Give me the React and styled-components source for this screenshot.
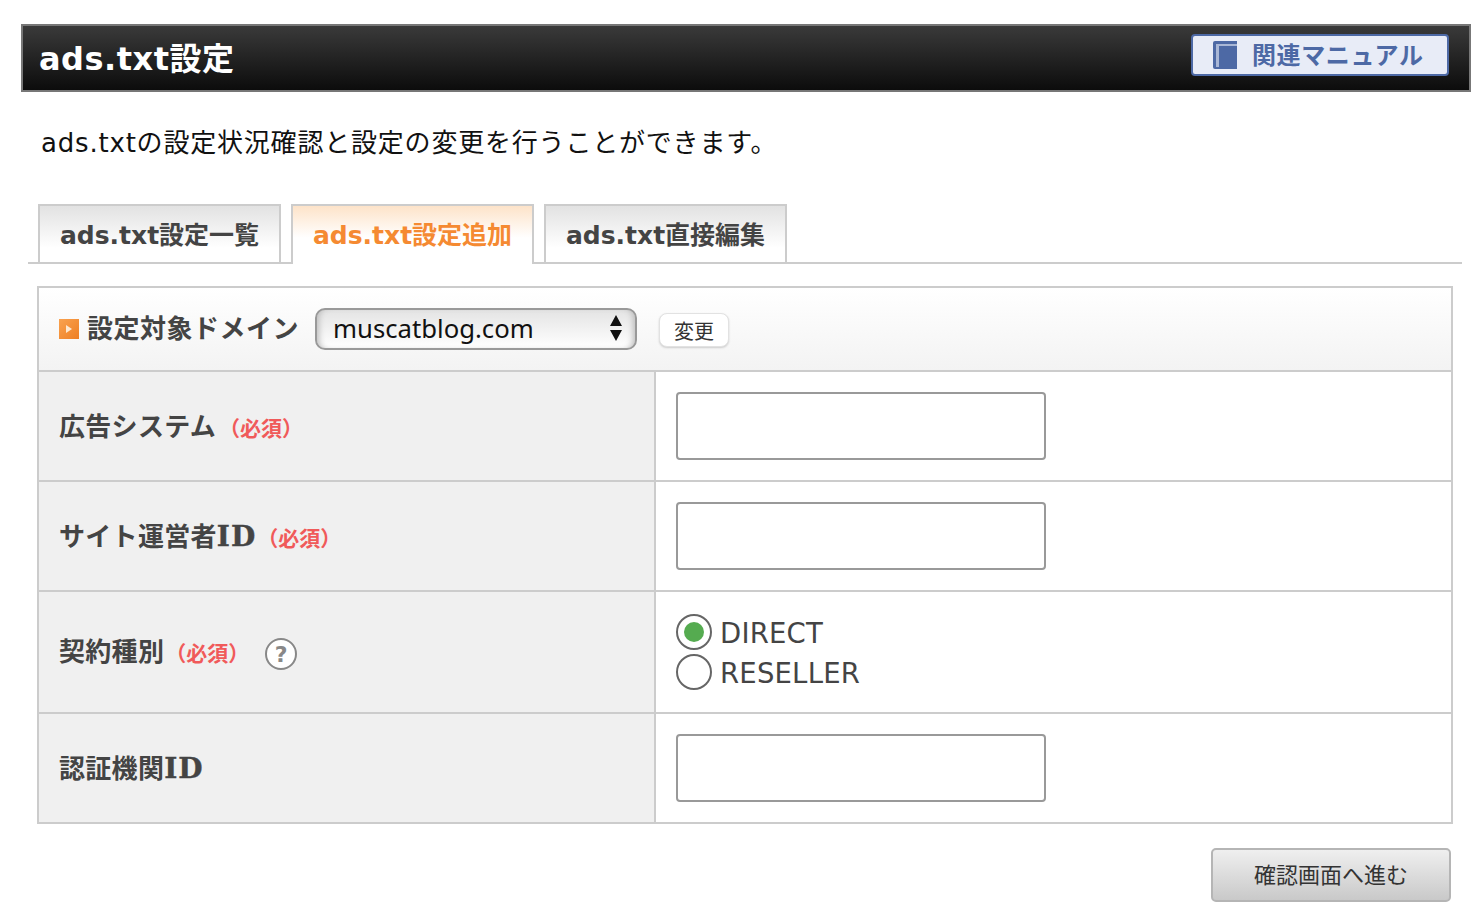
import React from "react";
import styled, { createGlobalStyle } from "styled-components";

const Global = createGlobalStyle`
  html, body { margin: 0; padding: 0; background: #fff; }
  body { font-family: "DejaVu Sans", "Noto Sans CJK JP", sans-serif; color: #444; }
  * { box-sizing: border-box; }
`;

const Page = styled.div`
  width: 1480px;
  height: 916px;
  overflow: hidden;
  padding: 24px 9px 0 21px;
`;
const Header = styled.header`
  height: 68px;
  border: 2px solid #777;
  background: linear-gradient(#3a3a3a, #0c0c0c);
  display: flex;
  align-items: center;
  justify-content: space-between;
  padding: 0 20px 0 16px;
`;
const Title = styled.h1`
  margin: 0 0 4px;
  font-size: 32px;
  font-weight: 700;
  color: #fff;
  letter-spacing: 0.5px;
`;
const ManualButton = styled.a`
  width: 258px;
  height: 42px;
  margin-top: -6px;
  background: #e8ecf7;
  border: 2px solid #4d69a5;
  border-radius: 4px;
  display: flex;
  align-items: center;
  gap: 15px;
  padding: 0 0 0 20px;
  color: #4d69a5;
  font-size: 24px;
  letter-spacing: 0.6px;
  font-weight: 700;
  font-family: "Noto Sans CJK JP", sans-serif;
`;
const ManualText = styled.span`
  margin-bottom: 4px;
`;
const Intro = styled.p`
  margin: 36px 0 0 20px;
  height: 30px;
  line-height: 30px;
  font-size: 26px;
  letter-spacing: 0.8px;
  color: #111;
  white-space: nowrap;
`;
const Tabs = styled.nav`
  margin: 46px 0 0 7px;
  width: 1434px;
  height: 60px;
  border-bottom: 2px solid #ccc;
  display: flex;
  gap: 10px;
  padding-left: 10px;
`;
const Tab = styled.a`
  width: 243px;
  height: 60px;
  border: 2px solid #ccc;
  border-bottom: ${(p) => (p.$active ? "none" : "2px solid #ccc")};
  background: ${(p) =>
    p.$active
      ? "linear-gradient(#fde3c9, #fff 55%)"
      : "linear-gradient(#e2e2e2, #fff 75%)"};
  color: ${(p) => (p.$active ? "#f58a32" : "#444")};
  font-size: 25px;
  font-weight: 700;
  display: flex;
  align-items: center;
  justify-content: center;
  padding-bottom: ${(p) => (p.$active ? "4px" : "2px")};
  white-space: nowrap;
`;
const FormTable = styled.section`
  margin: 22px 0 0 16px;
  width: 1416px;
  border: 2px solid #ccc;
`;
const DomainBar = styled.div`
  height: 84px;
  border-bottom: 2px solid #ccc;
  background: linear-gradient(#fff, #f3f3f3);
  display: flex;
  align-items: center;
  padding-left: 20px;
`;
const Bullet = styled.span`
  width: 20px;
  height: 20px;
  background: linear-gradient(135deg, #f9a24f, #ee7f24);
  display: flex;
  align-items: center;
  justify-content: center;
  &::after {
    content: "";
    border-left: 6px solid #fde8d0;
    border-top: 4px solid transparent;
    border-bottom: 4px solid transparent;
  }
`;
const DomainLabel = styled.span`
  margin: -6px 0 0 8px;
  font-size: 26px;
  letter-spacing: 0.5px;
  font-weight: 700;
  color: #444;
  font-family: "Noto Sans CJK JP", sans-serif;
  white-space: nowrap;
`;
const SelectBox = styled.div`
  margin-left: 16px;
  width: 322px;
  height: 42px;
  border: 2px solid #999;
  border-radius: 10px;
  background: linear-gradient(#e4e4e4, #fff);
  box-shadow: inset 6px 0 6px -4px #bbb, inset -6px 0 6px -4px #bbb;
  display: flex;
  align-items: center;
  justify-content: space-between;
  padding: 0 12px 2px 16px;
  font-size: 25.7px;
  color: #111;
  font-family: "Noto Sans", "DejaVu Sans", sans-serif;
`;
const ChangeButton = styled.button`
  margin: 2px 0 0 22px;
  width: 70px;
  height: 34px;
  background: #fff;
  border: 1px solid #e2e2e2;
  border-radius: 8px;
  box-shadow: 0 1px 2px #ccc;
  font-family: "Noto Sans CJK JP", sans-serif;
  font-size: 20px;
  color: #333;
  padding: 0;
`;
const Row = styled.div`
  display: grid;
  grid-template-columns: 617px 1fr;
  height: ${(p) => p.$height}px;
  border-bottom: ${(p) => (p.$last ? "none" : "2px solid #ccc")};
`;
const Label = styled.div`
  background: #f0f0f0;
  border-right: 2px solid #ccc;
  display: flex;
  align-items: center;
  padding-left: 20px;
  padding-bottom: ${(p) => p.$bottom || 4}px;
  font-size: 26px;
  letter-spacing: 0.3px;
  font-weight: 700;
  color: #444;
  white-space: nowrap;
`;
const LatinBold = styled.span`
  margin-top: 4px;
  font-family: "DejaVu Serif", serif;
  font-size: 28px;
  font-weight: 700;
  letter-spacing: 1px;
  -webkit-text-stroke: 0.4px #444;
`;
const Required = styled.span`
  margin: 6px 0 0 ${(p) => p.$gap}px;
  font-size: 21px;
  letter-spacing: 0;
  font-weight: 700;
  color: #f05a5a;
  font-family: "Noto Sans CJK JP", sans-serif;
`;
const Help = styled.span`
  margin: 10px 0 0 16px;
  width: 32px;
  height: 32px;
  border-radius: 50%;
  border: 2px solid #888;
  background: #fff;
  color: #888;
  font-size: 22px;
  font-weight: 700;
  display: flex;
  align-items: center;
  justify-content: center;
`;
const Field = styled.div`
  display: flex;
  align-items: center;
  padding-left: 20px;
`;
const TextInput = styled.input`
  width: 370px;
  height: 68px;
  border: 2px solid #999;
  border-radius: 4px;
  background: #fff;
`;
const RadioGroup = styled.div`
  display: flex;
  flex-direction: column;
  gap: 4px;
`;
const RadioRow = styled.label`
  display: flex;
  align-items: center;
  gap: 8px;
  height: 36px;
  font-size: 27.5px;
  letter-spacing: 0.2px;
  color: #444;
`;
const RadioText = styled.span`
  margin-top: 2px;
`;
const RadioCircle = styled.span`
  width: 36px;
  height: 36px;
  border-radius: 50%;
  border: 2px solid #666;
  background: #fff;
  display: flex;
  align-items: center;
  justify-content: center;
  &::after {
    content: "";
    width: 20px;
    height: 20px;
    border-radius: 50%;
    background: ${(p) => (p.$checked ? "#55ab50" : "transparent")};
  }
`;
const Footer = styled.div`
  margin: 24px 0 0 0;
  display: flex;
  justify-content: flex-end;
  padding-right: 20px;
`;
const NextButton = styled.button`
  width: 240px;
  height: 54px;
  border: 2px solid #b5b5b5;
  border-radius: 5px;
  background: linear-gradient(#efefef, #c9c9c9);
  font-family: "Noto Sans CJK JP", sans-serif;
  font-size: 22px;
  color: #333;
  padding: 0 0 4px;
`;

export default function App() {
  return (
    <Page>
      <Global />
      <Header>
        <Title>ads.txt設定</Title>
        <ManualButton>
          <svg width="24" height="28" viewBox="0 0 24 28">
            <path d="M2 0h22v28H2a2 2 0 0 1-2-2V2a2 2 0 0 1 2-2z" fill="#4d69a5" />
            <path d="M3 3h21v2H6v21H3z" fill="#a9b7d6" />
          </svg>
          <ManualText>関連マニュアル</ManualText>
        </ManualButton>
      </Header>
      <Intro>ads.txtの設定状況確認と設定の変更を行うことができます。</Intro>
      <Tabs>
        <Tab>ads.txt設定一覧</Tab>
        <Tab $active>ads.txt設定追加</Tab>
        <Tab>ads.txt直接編集</Tab>
      </Tabs>
      <FormTable>
        <DomainBar>
          <Bullet />
          <DomainLabel>設定対象ドメイン</DomainLabel>
          <SelectBox>
            muscatblog.com
            <svg width="14" height="30" viewBox="0 0 14 30">
              <path d="M7 2l6 11H1zM7 28l6-11H1z" fill="#111" />
            </svg>
          </SelectBox>
          <ChangeButton>変更</ChangeButton>
        </DomainBar>
        <Row $height={110}>
          <Label>広告システム<Required $gap={3}>（必須）</Required></Label>
          <Field><TextInput /></Field>
        </Row>
        <Row $height={110}>
          <Label>サイト運営者<LatinBold>ID</LatinBold><Required $gap={1}>（必須）</Required></Label>
          <Field><TextInput /></Field>
        </Row>
        <Row $height={122}>
          <Label $bottom={6}>
            契約種別<Required $gap={1}>（必須）</Required>
            <Help>?</Help>
          </Label>
          <Field>
            <RadioGroup>
              <RadioRow><RadioCircle $checked /><RadioText>DIRECT</RadioText></RadioRow>
              <RadioRow><RadioCircle /><RadioText>RESELLER</RadioText></RadioRow>
            </RadioGroup>
          </Field>
        </Row>
        <Row $height={108} $last>
          <Label>認証機関<LatinBold>ID</LatinBold></Label>
          <Field><TextInput /></Field>
        </Row>
      </FormTable>
      <Footer>
        <NextButton>確認画面へ進む</NextButton>
      </Footer>
    </Page>
  );
}
